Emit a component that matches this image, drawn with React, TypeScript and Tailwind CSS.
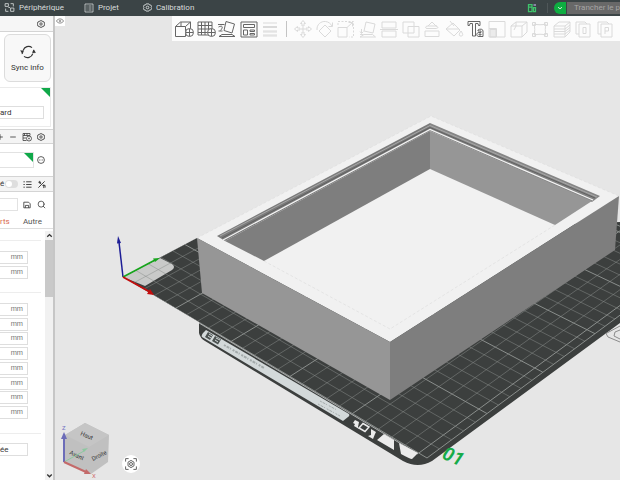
import type { ReactNode } from 'react'
import { clsx } from 'clsx'
import { Search } from 'lucide-react'

interface IconProps {
  className?: string
  children: ReactNode
}

// All line icons share a 20px box
function Icon({ className = 'size-5', children }: IconProps) {
  return (
    <svg viewBox="0 0 20 20" fill="none" stroke="currentColor" className={clsx('shrink-0', className)} aria-hidden="true">
      {children}
    </svg>
  )
}

const PLUS = (
  <>
    <circle cx="15.500" cy="13.500" r="4" fill="#fcfcfc" />
    <path d="M15.500 10v7M12 13.500h7" />
  </>
)

const MAIN_TOOLS = [
  { name: 'Ajouter', icon: <><path d="M1.500 7.500h10V17.500h-10zM1.500 7.500l5-4.500h10l-5 4.500M16.500 3v7M7 3v4" />{PLUS}</> },
  { name: 'Ajouter un plateau', icon: <><path d="M2 3h14v13H2zM5.500 3v13M9 3v13M12.500 3v13M2 6.500h14M2 10h14M2 13.500h14" />{PLUS}</> },
  { name: 'Orientation auto', icon: <path d="M9 2.500l8.500 2.500-2.500 9-8-2.500zM1 5.500h6.500M1.500 8c4-2 5 0 2 3.500M1.500 12h4M2 17.500l3-2h10l3 2z" /> },
  { name: 'Organiser', icon: <path d="M2 3h16v15H2zM4.500 5.500h11v3h-11zM4.500 11h4v5h-4zM11 11h4.500v1.500H11zM11 14.500h4.500V16H11z" /> },
]

const EDIT_TOOLS = [
  { name: 'Déplacer', icon: <path d="M10 1.500l2.500 3h-1.500v2.500H9V4.500H7.500zM10 18.500l2.500-3h-1.500V13H9v2.500H7.500zM1.500 10l3-2.500V9H7v2H4.500v1.500zM18.500 10l-3-2.500V9H13v2h2.500v1.500zM9 9h2v2H9z" /> },
  { name: 'Pivoter', icon: <path d="M10 6l6 6-6 6-6-6zM2 11C1.500 5.500 6 2 10.500 2.500c3 .3 5 2 6.500 4.500M17.500 3.500V7.500H13.500" /> },
  { name: 'Échelle', icon: <><path d="M2 8.500h9V18H2zM11 8.500l5.500-5M12.500 3.500h4v4" /><path d="M2 6V2.500h15.500V18H13" strokeDasharray="2 1.500" /></> },
  { name: 'Poser sur une face', icon: <path d="M8 3l9 2-2 9-9-2zM2 15.500h3.500M2 18l4-2.500h8.500l3 2.500zM3.500 10v4M2 12.500l1.500 2 2-2" /> },
  { name: 'Couper', icon: <path d="M3 3h14v6H3zM3 12h14v6H3zM1 10.500h18" /> },
  { name: 'Maillage', icon: <path d="M2 3h11v11H2zM7 7.500h11V18H7z" /> },
  { name: 'Supports', icon: <path d="M3 12h14v5.500H3zM5 9.500c-2 0-2-2.500 1-2.500L10 3l4 4c3 1 2 2.500 0 2.500zM6 7h9" /> },
  { name: 'Peinture', icon: <path d="M2 10l7-6 7 7-6 6zM2 10h13M6 2l4 5M17 12c2 3 2.500 5 0 5s-2-2 0-5z" /> },
]

const PART_TOOLS = [
  { name: 'Mesurer', icon: <><path d="M2 2.500h16V18H2zM2 9.500h7.500V18" /><path d="M3 10.500h6V18H3z" fill="currentColor" fillOpacity=".5" /></> },
  { name: 'Assembler', icon: <path d="M2 7l5-4h11v10l-5 5H2zM2 7h11v11M13 7l5-4M7 3v4l-2 4" /> },
  { name: 'Vue', icon: <path d="M4 5c4 1 8 1 12 0-1 4-1 7 0 11-4-1-8-1-12 0 1-4 1-7 0-11zM2.500 3.500h3v3h-3zM14.500 3.500h3v3h-3zM2.500 14.500h3v3h-3zM14.500 14.500h3v3h-3z" /> },
  { name: 'Couches', icon: <path d="M2 7l5-4h11v10l-5 5H2zM2 7h11v11M13 7l5-4M2 10h11l5-4M2 12.500h11l5-4M2 15h11l5-4" /> },
  { name: 'Objets', icon: <path d="M3 3h9l2 2M3 3v12h3M6 5h11v13H6zM10 8.500h3v6h-3z" /> },
  { name: 'Plateaux', icon: <path d="M3 3h9l2 2M3 3v12h3M6 5h11v13H6zM10 15V8.500h3.500V12H10" /> },
]

function ToolButton({ name, disabled, children }: { name: string; disabled?: boolean; children: ReactNode }) {
  return (
    <button
      aria-label={name}
      disabled={disabled}
      className={clsx('flex size-5 items-center justify-center', disabled ? 'text-[#dadada]' : 'text-[#666]')}
    >
      <Icon>{children}</Icon>
    </button>
  )
}

function Gear({ className }: { className?: string }) {
  return (
    <Icon className={className}>
      <path strokeWidth="2" d="M7 2h6l1.500 2.500h3L19 8l-1 2 1 2-1.500 3.500h-3L13 18H7l-1.500-2.500h-3L1 12l1-2-1-2 1.500-3.500h3z" />
      <circle cx="10" cy="10" r="3" strokeWidth="2" />
    </Icon>
  )
}

function Header() {
  return (
    <header className="flex h-4 shrink-0 items-center bg-[#3b4446] pb-px text-[8px] leading-none text-[#d8dcdc]">
      <nav className="flex items-center gap-5 pl-1">
        <a href="#device" className="flex items-center gap-1">
          <Icon className="size-[11px]"><path strokeWidth="1.500" d="M2 3h6v5H2zM12 3h5v5M3 12v5h5M12 11h6v6h-6zM8 10h3" /></Icon>
          Périphérique
        </a>
        <a href="#project" className="flex items-center gap-1">
          <Icon className="size-[10px]"><path strokeWidth="1.500" d="M2 2h16v16H2zM5 6h2M9 6h6M5 10h2M9 10h6M5 14h2M9 14h6" /></Icon>
          Projet
        </a>
        <a href="#calibration" className="ml-1 flex items-center gap-1">
          <Gear className="size-[9px]" />
          Calibration
        </a>
      </nav>
      <div className="ml-auto flex items-center">
        <button aria-label="Plateau" className="mr-[10px] text-[#3fc46c]">
          <Icon className="size-[10px]">
            <path strokeWidth="2.500" d="M3 3h7v14H3zM3 8h7M13 9h4v8h-4z" />
            <path stroke="#b9a9e0" strokeWidth="2.500" d="M13 4h5" />
          </Icon>
        </button>
        <span className="mr-[6px] h-[10px] w-px bg-[#4f5759]" />
        <button aria-label="Options de tranchage" className="flex h-3 w-3 items-center justify-center rounded-l-md bg-[#0ead41] text-white">
          <Icon className="size-[8px]"><path strokeWidth="2" d="M5 8l5 4 5-4" /></Icon>
        </button>
        <button className="ml-px h-3 bg-[#686868] pl-[7px] text-left whitespace-nowrap text-[#a5a5a5]">
          Trancher le p
        </button>
      </div>
    </header>
  )
}

function UnitRow({ label }: { label: string }) {
  return (
    <label className="flex h-[13px] w-7 items-center justify-end border border-l-0 border-[#dedede] pr-1 text-[7px] leading-none text-[#777]">
      <input aria-label={label} className="w-2 min-w-0 flex-1 outline-none" />
      mm
    </label>
  )
}

const WIDTHS = ['Défaut', 'Première couche', 'Paroi extérieure', 'Paroi intérieure', 'Surface supérieure', 'Remplissage', 'Remplissage interne', 'Supports']

function Sidebar() {
  return (
    <aside className="flex w-[55px] shrink-0 flex-col overflow-hidden border-r-2 border-[#c6c6c6] bg-white text-[8px] leading-none text-[#333]">
      <div className="flex h-4 items-center justify-end border-b border-[#d4d4d4] bg-[#f6f6f6] pr-2">
        <button aria-label="Réglages imprimante"><Gear className="size-[8px]" /></button>
      </div>
      <button className="mt-0.5 ml-1 flex h-12 w-[47px] flex-col items-center justify-center gap-1 rounded-md border border-[#dcdcdc] bg-[#f8f8f8]">
        <Icon className="size-4">
          <path strokeWidth="1.500" d="M4 8a7 7 0 0 1 11-3.500M16 12A7 7 0 0 1 5 15.500M17 7.500a7 7 0 0 1 .2 4M3 12.500a7 7 0 0 1-.2-4" />
          <path fill="currentColor" stroke="none" d="M0 8h5l-1.500 4zM20 11h-5l2-4z" />
        </Icon>
        <span className="whitespace-nowrap">Sync info</span>
      </button>
      <div className="mt-[5px] h-10 w-[51px] border-y border-r border-[#ebebeb]">
        <svg viewBox="0 0 9 9" className="ml-auto size-[9px]"><path d="M0 0h9v9z" fill="#10a849" /></svg>
        <input aria-label="Type de plateau" defaultValue="ard" className="mt-[9px] block h-[13px] w-11 border border-l-0 border-[#dedede] outline-none" />
      </div>

      <div className="mt-0.5 flex h-[15px] items-center justify-end gap-[5px] border-y border-[#d4d4d4] bg-[#f4f4f4] pr-2">
        <button aria-label="Ajouter un filament"><Icon className="size-[8px]"><path strokeWidth="2" d="M3 10h14M10 3v14" /></Icon></button>
        <button aria-label="Retirer un filament"><Icon className="size-[8px]"><path strokeWidth="2" d="M3 10h14" /></Icon></button>
        <button aria-label="Synchroniser"><Icon className="size-[10px]"><path strokeWidth="1.500" d="M2 3h14v4H2zM2 7v10h7M5 3v4M10 3v4M2 12h6" /><circle cx="14" cy="13" r="5" strokeWidth="1.500" /><path d="M12 13h4M14 11v4" /></Icon></button>
        <button aria-label="Réglages filament"><Gear className="size-[8px]" /></button>
      </div>
      <div className="mt-2 flex h-4 items-center gap-[3px]">
        <label className="flex h-4 w-[34px] justify-end border border-l-0 border-[#e2e2e2]">
          <input aria-label="Filament" className="w-2 min-w-0 flex-1 outline-none" />
          <svg viewBox="0 0 9 9" className="size-[9px]"><path d="M0 0h9v9z" fill="#10a849" /></svg>
        </label>
        <button aria-label="Plus d’options"><Icon className="size-[8px]"><circle cx="10" cy="10" r="8.500" strokeWidth="2" /><path strokeWidth="2" d="M5 10h2M9 10h2M13 10h2" /></Icon></button>
      </div>

      <div className="mt-2 flex h-4 items-center border-y border-[#d4d4d4] bg-[#f4f4f4]">
        <label className="flex items-center gap-px">
          é
          <input type="checkbox" aria-label="Avancé" className="peer sr-only" />
          <span className="flex h-[8px] w-[13px] rounded-full bg-[#dedede] p-px"><span className="size-[6px] rounded-full bg-white" /></span>
        </label>
        <button aria-label="Liste" className="ml-[5px]"><Icon className="size-[9px]"><path strokeWidth="2" d="M1 4h3M7 4h12M1 10h3M7 10h12M1 16h3M7 16h12" /></Icon></button>
        <button aria-label="Comparer" className="ml-[5px]"><Icon className="size-[9px]"><path strokeWidth="2" d="M3 17L17 3M3 5h5v4M12 12h6v5M6 2v6M15 10v8" /></Icon></button>
      </div>
      <div className="mt-[6px] flex h-[13px] items-center">
        <input aria-label="Profil" className="h-[13px] w-[18px] border border-l-0 border-[#e2e2e2] outline-none" />
        <button aria-label="Enregistrer" className="ml-[5px]"><Icon className="size-[8px]"><path strokeWidth="2" d="M2 3h12l4 4v10H2zM6 17v-6h8v6" /></Icon></button>
        <button aria-label="Rechercher" className="ml-[6px]"><Search className="size-[9px]" /></button>
      </div>
      <nav className="mt-1 flex h-[14px] items-center justify-between border-b border-[#dedede] pr-[11px]">
        <a href="#supports" className="text-[#d9694d]">rts</a>
        <a href="#autre" className="text-[#555]">Autre</a>
      </nav>

      <div className="mt-0.5 flex flex-1">
        <div className="flex-1">
          <div className="mr-1 flex h-[62px] flex-col border-b border-[#ededed]">
            <div className="h-[10px] border-b border-[#ededed]" />
            <div className="mt-[10px] flex flex-col gap-0.5">
              <UnitRow label="Hauteur de couche" />
              <UnitRow label="Hauteur de première couche" />
            </div>
          </div>
          <div className="mr-1 flex h-[141px] flex-col border-b border-[#ededed] pt-[10px]">
            <div className="flex h-[116px] flex-col justify-between">
              {WIDTHS.map(label => <UnitRow key={label} label={label} />)}
            </div>
          </div>
          <input aria-label="Position de couture" defaultValue="ée" className="mt-[9px] block h-[13px] w-7 border border-l-0 border-[#dedede] outline-none" />
        </div>
        <div className="flex w-2 flex-col items-center justify-between bg-[#f1f1f1]">
          <div className="flex w-full flex-col items-center">
            <Icon className="size-[9px]"><path strokeWidth="3" d="M5 13l5-5 5 5" /></Icon>
            <div className="h-[57px] w-full bg-[#c9c9c9]" />
          </div>
          <Icon className="size-[9px]"><path strokeWidth="3" d="M5 8l5 5 5-5" /></Icon>
        </div>
      </div>
    </aside>
  )
}

// Perspective projection of plate coordinates (in 10 mm cells) onto the view
function project(x: number, y: number) {
  const w = 1 - 0.00543 * x + 0.0064 * y
  return `${((9.557 * x + 13.45 * y + 123) / w).toFixed(2)} ${((4.583 * x - 5 * y + 277) / w).toFixed(2)}`
}

const SIZE = 25.6
const STEPS = [...Array.from({ length: 26 }, (_, i) => i), SIZE]
const PLATE = 'M123 277L199 322V333Q200 338 205 341L403 461Q418 469 432 461L620 323V222L197 238Z'

function Plate() {
  return (
    <g>
      <clipPath id="plate"><path d={PLATE} /></clipPath>
      <path d={PLATE} fill="#3c3f3e" />
      <path d="M123 277L160 258L172 264Q176 267 172 270L145 286Z" fill="#c9cac9" />
      <g clipPath="url(#plate)" stroke="#8a8e8c">
        {STEPS.map(s => (
          <g key={s} strokeWidth={s % 5 === 0 || s === SIZE ? 1 : 0.5}>
            <path d={`M${project(s, 0)}L${project(s, SIZE)}`} />
            <path d={`M${project(0, s)}L${project(SIZE, s)}`} />
          </g>
        ))}
      </g>
      <path d="M199 323L418 454" stroke="#c9cccb" strokeWidth=".8" />
      <path d="M206 330L349 414Q350 416 348 417L343 421L202 337Q201 336 203 333Z" fill="#d3d9da" />
      <g fill="#4c5251">
        <path d="M208 332l5 3-3 5-5-3zM215 336l6 3.500-3 5-6-3.500z" />
        <path d="M209 334l3 2M208 336l3 2M216 338l4 2M215 340l3 2" stroke="#d3d9da" />
      </g>
      <g stroke="#a3aaaa" strokeWidth="2" strokeDasharray="2 1 3 1 1 2">
        <path d="M224 345L264 368" />
        <path d="M320 401L337 410M318 404L340 416" strokeWidth="1" />
      </g>
      <g fill="#ebebeb">
        <path d="M355 420l4 2-1 5 1 2-5-3 1-2-2-1zM371 429l5 3-1 2-2 5-5-3 3-1z" />
        <path d="M363 423.500l6 3.500-4 4.500-6-3.500z" fill="none" stroke="#ebebeb" strokeWidth="1.500" />
        <path d="M384 434L394 440V450L377 440ZM399 443L418 453L412 459Q410 459 401 454Z" />
      </g>
    </g>
  )
}

function Model() {
  return (
    <g>
      <path d="M197 238L431 116L619 196L390 342Z" fill="#f1f1f1" />
      <path d="M197 238L390 342V400L202 293Z" fill="#969696" />
      <path d="M390 342L619 196L615 250L390 400Z" fill="#7e7e7e" />
      {/* recessed lip */}
      <path d="M217 236L430 123V131L225 241Z" fill="#7b7b7b" />
      <path d="M430 123L600 196L592 202L430 131Z" fill="#858585" />
      <path d="M220 236L430 125.500L597 197" fill="none" stroke="#a8a8a8" />
      <path d="M222 238L430 127.500L595 198" fill="none" stroke="#606060" />
      <path d="M223 240L430 129.500L593 200" fill="none" stroke="#f4f4f4" strokeWidth="1.300" />
      {/* inner walls */}
      <path d="M225 241L430 131V169L264 261Z" fill="#7e7e7e" />
      <path d="M430 131L592 201L555 225L430 169Z" fill="#969696" />
      <path d="M264 261L390 329L555 225M197 238L431 116L619 196" fill="none" stroke="#dedede" strokeWidth=".7" strokeDasharray="3 2" />
    </g>
  )
}

function ViewCube() {
  return (
    <g fontSize="6">
      <path d="M85 423L109 435L108 462L91 474L64 462L65 435Z" fill="#c0c0c0" />
      <path d="M85 423L109 435L89 447L65 435Z" fill="#c5c5c5" />
      <g fill="#333">
        <text x="80" y="435" transform="rotate(23 80 435)">Haut</text>
        <text x="69" y="454" transform="rotate(25 69 454)">Avant</text>
        <text x="93" y="461" transform="rotate(-27 93 461)">Droite</text>
      </g>
      <path d="M64 462L84 451" stroke="#8cc8a0" />
      <path d="M88 448l-6 1 2 3z" fill="#8cc8a0" />
      <path d="M64 462V438" stroke="#6c6cb8" strokeWidth="2" />
      <path d="M64 432l3 7h-6z" fill="#6c6cb8" />
      <path d="M64 462L86 472" stroke="#c46a6a" strokeWidth="2" />
      <path d="M91 474l-5-5-2 5z" fill="#c46a6a" />
      <text x="62" y="430" fill="#7777c4">Z</text>
      <text x="92" y="478" fill="#d07070">X</text>
    </g>
  )
}

function Viewport() {
  return (
    <main className="relative min-w-0 flex-1 overflow-hidden bg-[#e6e6e6]">
      <svg viewBox="55 16 565 464" preserveAspectRatio="xMinYMin slice" className="absolute inset-0 h-full w-full" role="img" aria-label="Vue 3D du plateau">
        <Plate />
        <Model />
        <path d="M123 277L119 242" stroke="#1d1d96" strokeWidth="1.500" />
        <path d="M118 236l3 7-4 .5z" fill="#1d1d96" />
        <path d="M123 277L155 260" stroke="#16a51b" strokeWidth="1.500" />
        <path d="M160 258l-7 .5 2 3.500z" fill="#16a51b" />
        <path d="M123 277L149 291.500" stroke="#c40d0d" strokeWidth="1.800" />
        <path d="M154 295l-4-6-3 5z" fill="#c40d0d" />
        <path d="M620 326L606 333.500L608 337L620 342M620 330l-5 2-1 4 6 3" fill="none" stroke="#8c8c8c" />
        <text x="441" y="458" transform="rotate(24 441 458)" fontSize="19" fontWeight="700" fontStyle="italic" fill="#16ab49">01</text>
        <ViewCube />
      </svg>

      <div className="relative flex items-start">
        <button aria-label="Afficher" className="flex h-[10px] w-[10px] items-center justify-center bg-white text-[#777]">
          <Icon className="size-[8px]"><path strokeWidth="2" d="M1 10c4-7 14-7 18 0-4 7-14 7-18 0z" /><circle cx="10" cy="10" r="2" strokeWidth="2" /></Icon>
        </button>
        <div role="toolbar" className="ml-[107px] flex h-[25px] min-w-0 flex-1 items-center bg-[#fcfcfc] pl-0.5">
          <div className="flex w-[106px] shrink-0 justify-between">
            {MAIN_TOOLS.map(t => <ToolButton key={t.name} name={t.name}>{t.icon}</ToolButton>)}
            <ToolButton name="Calques" disabled><path d="M3 4h14M3 7.500h14M3 8.500h14M3 12h14M3 13h14M3 16h14M3 17h14" /></ToolButton>
          </div>
          <span className="mx-[6px] h-4 w-px shrink-0 bg-[#c4c4c4]" />
          <div className="flex w-[322px] shrink-0 justify-between">
            {EDIT_TOOLS.map(t => <ToolButton key={t.name} name={t.name} disabled>{t.icon}</ToolButton>)}
            <ToolButton name="Texte">
              <path d="M2 2.500h12v4h-1.500L12 4.500H9.500V17H6.500V4.500H4L3.500 6.500H2z" />
              <path d="M12 11c2-1.500 5-1 5 1v5.500h-4c-3 0-3-4 0-4h2v-1.500h-3zM13 15h2v1h-2z" />
            </ToolButton>
            {PART_TOOLS.map(t => <ToolButton key={t.name} name={t.name} disabled>{t.icon}</ToolButton>)}
          </div>
        </div>
      </div>

      <button aria-label="Recentrer la vue" className="absolute bottom-[7px] left-[67px] flex size-[18px] items-center justify-center rounded-full bg-white text-[#555]">
        <Icon className="size-3">
          <path strokeWidth="1.500" d="M1 6V1h5M14 1h5v5M19 14v5h-5M6 19H1v-5M10 4l5 3v6l-5 3-5-3V7z" />
          <circle cx="10" cy="10" r="2.500" strokeWidth="1.500" />
        </Icon>
      </button>
    </main>
  )
}

export default function App() {
  return (
    <div className="flex min-h-screen flex-col font-[Roboto,sans-serif]">
      <Header />
      <div className="flex flex-1">
        <Sidebar />
        <Viewport />
      </div>
    </div>
  )
}
